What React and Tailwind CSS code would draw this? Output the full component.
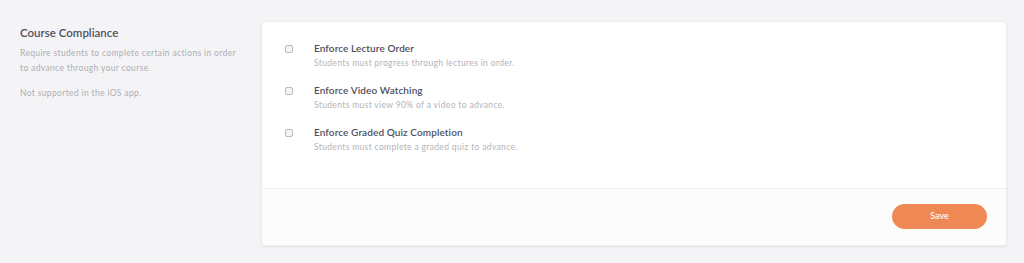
const rules = [
  { title: 'Enforce Lecture Order', desc: 'Students must progress through lectures in order.' },
  { title: 'Enforce Video Watching', desc: 'Students must view 90% of a video to advance.' },
  { title: 'Enforce Graded Quiz Completion', desc: 'Students must complete a graded quiz to advance.' },
]

function RuleRow({ title, desc }) {
  return (
    <div className="flex items-start">
      <div className="w-[52px] pl-[23px] pt-[3px]">
        <div className="w-[8px] h-[8px] rounded-[2px] border border-[#b9b9c0] bg-[#f4f4f6]" />
      </div>
      <div>
        <p className="text-[10px] leading-[13px] font-semibold tracking-[0.1px] text-[#4f4f5e]">{title}</p>
        <p className="text-[8.5px] leading-[12px] mt-[2px] tracking-[0.35px] text-[#b3b3ba]">{desc}</p>
      </div>
    </div>
  )
}

export default function App() {
  return (
    <div className="w-[1024px] h-[263px] bg-[#f4f4f6] flex font-['Lato',sans-serif]">
      {/* Left description */}
      <div className="w-[261px] pl-[20px] pt-[26px]">
        <h3 className="text-[11.5px] leading-[14px] font-semibold text-[#50505e]">Course Compliance</h3>
        <p className="mt-[6px] text-[8.5px] leading-[15px] tracking-[0.35px] text-[#aeaeb5] w-[225px]">
          Require students to complete certain actions in order to advance through your course.
        </p>
        <p className="mt-[10px] text-[8.5px] leading-[15px] tracking-[0.35px] text-[#aeaeb5]">Not supported in the iOS app.</p>
      </div>

      {/* Settings card */}
      <div className="mt-[21px] w-[746px] h-[225px] bg-white rounded-[3px] shadow-[0_1px_2px_rgba(0,0,0,0.08)] border border-[#ececf0] flex flex-col overflow-hidden">
        <div className="h-[167px] pt-[20px] flex flex-col gap-[15px] border-b border-[#efeff2]">
          {rules.map(r => (
            <RuleRow key={r.title} title={r.title} desc={r.desc} />
          ))}
        </div>
        <div className="flex-1 bg-[#fcfcfc] flex items-center justify-end pr-[19px] pb-[2px]">
          <button className="w-[95px] h-[25px] rounded-full bg-[#ee8854] text-white text-[9px] font-medium">
            Save
          </button>
        </div>
      </div>
    </div>
  )
}
